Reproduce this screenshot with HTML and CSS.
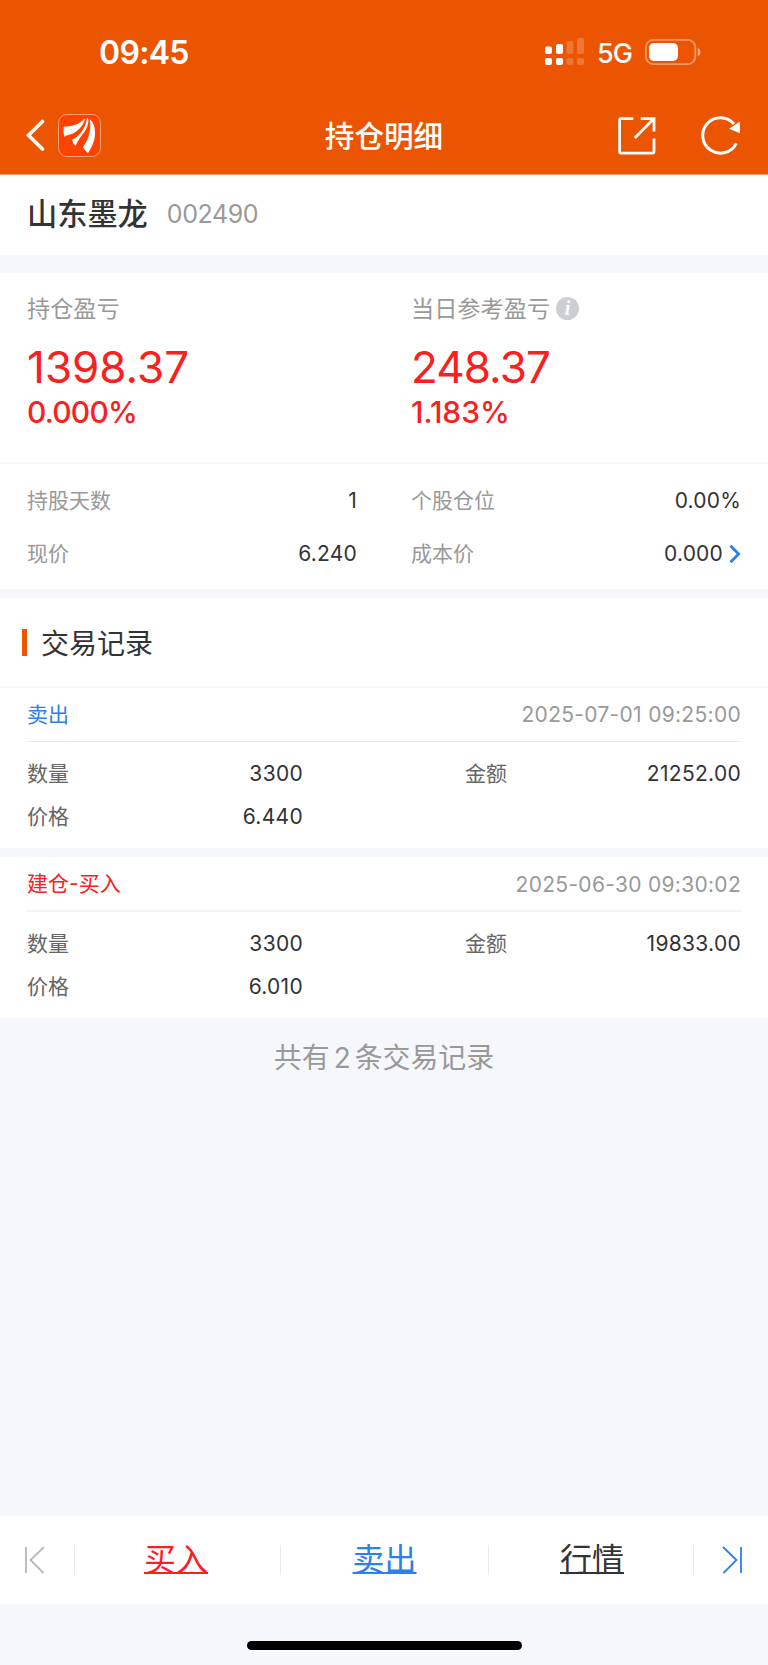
FILE: index.html
```html
<!DOCTYPE html>
<html lang="zh-CN">
<head>
  <meta charset="UTF-8">
  <meta name="viewport" content="width=device-width, initial-scale=1.0">
  <title>持仓明细</title>
  <link rel="stylesheet" href="styles.css">
</head>
<body>
  <header class="header">
    <div class="status-bar">
      <span class="time">09:45</span>
      <div class="status-icons">
        <svg class="signal" width="39" height="27" viewBox="0 0 39 27" fill="#fff">
          <rect x="0" y="8.5" width="7" height="7.5" rx="2"/>
          <rect x="0" y="20" width="7" height="7" rx="2"/>
          <rect x="11" y="6" width="7" height="10" rx="2"/>
          <rect x="11" y="20" width="7" height="7" rx="2"/>
          <g opacity="0.2">
            <rect x="21.5" y="3" width="7" height="13" rx="2"/>
            <rect x="21.5" y="20" width="7" height="7" rx="2"/>
            <rect x="32" y="0" width="7" height="16" rx="2"/>
            <rect x="32" y="20" width="7" height="7" rx="2"/>
          </g>
        </svg>
        <span class="network">5G</span>
        <svg class="battery" width="56" height="26" viewBox="0 0 56 26">
          <rect x="0.9" y="0.9" width="49.4" height="24.2" rx="7.5" fill="none" stroke="#fff" stroke-opacity="0.4" stroke-width="1.8"/>
          <rect x="4" y="4" width="29" height="18" rx="5" fill="#fff"/>
          <path d="M52.7 8.5Q55.6 10 55.6 13T52.7 17.5Z" fill="#fff" fill-opacity="0.5"/>
        </svg>
      </div>
    </div>
    <nav class="nav-bar">
      <div class="nav-left">
        <svg width="20" height="34" viewBox="0 0 20 34">
          <path d="M17.5 3.5L3.5 17.2L17.5 31" fill="none" stroke="#fff" stroke-width="3.6" stroke-linecap="round"/>
        </svg>
        <svg class="logo" width="43" height="43" viewBox="0 0 129 129">
          <rect x="1.5" y="1.5" width="126" height="126" rx="25" fill="#ff4200" stroke="#ff9f78" stroke-width="3"/>
          <g fill="#fff">
            <path d="M17 38C46 38 67 29 80 13C84 24 62 52 43 59C34 62 26 63 19 68Q15 52 17 38Z"/>
            <path d="M87 11Q92 13 91 24C88 45 77 57 67 70C60 80 57 88 52 96Q43 86 42 77C62 69 84 42 87 11Z"/>
            <path d="M95 15C108 25 112 45 111 62C110 85 98 105 90 117Q78 108 75 99C85 84 103 58 95 15Z"/>
          </g>
        </svg>
      </div>
      <h1>持仓明细</h1>
      <div class="nav-right">
        <svg width="38" height="38" viewBox="0 0 38 38" fill="none" stroke="#fff" stroke-width="2.8">
          <path d="M15.3 1.6H3.1Q1.6 1.6 1.6 3.1V34.6Q1.6 36.1 3.1 36.1H34.5Q36 36.1 36 34.6V21.5"/>
          <path d="M22.7 1.6H36V14.5M36 1.6L16.8 21"/>
        </svg>
        <svg width="40" height="40" viewBox="0 0 40 40">
          <path d="M35.3 27.3A17.7 17.7 0 1 1 33 8" fill="none" stroke="#fff" stroke-width="3"/>
          <path d="M39 5.5V17.2L28 12.8Z" fill="#fff"/>
        </svg>
      </div>
    </nav>
  </header>

  <main>
    <section class="stock">
      <span class="stock-name">山东墨龙</span>
      <span class="stock-code">002490</span>
    </section>

    <section class="profit">
      <div class="profit-item">
        <div class="profit-label">持仓盈亏</div>
        <div class="profit-value">1398.37</div>
        <div class="profit-rate">0.000%</div>
      </div>
      <div class="profit-item day">
        <div class="profit-label">当日参考盈亏 <i class="info">i</i></div>
        <div class="profit-value">248.37</div>
        <div class="profit-rate">1.183%</div>
      </div>
    </section>

    <section class="details">
      <div class="row"><span class="label">持股天数</span><span class="num">1</span></div>
      <div class="row"><span class="label">个股仓位</span><span class="num">0.00%</span></div>
      <div class="row"><span class="label">现价</span><span class="num">6.240</span></div>
      <div class="row">
        <span class="label">成本价</span>
        <span class="num">0.000</span>
        <svg class="chevron" width="12" height="20" viewBox="0 0 12 20">
          <path d="M1.5 1.8L9.6 10L1.5 18.2" fill="none" stroke="#2c80ea" stroke-width="2.8"/>
        </svg>
      </div>
    </section>

    <h2 class="section-title">交易记录</h2>

    <article class="record">
      <div class="record-head">
        <span class="label sell">卖出</span>
        <time>2025-07-01 09:25:00</time>
      </div>
      <div class="record-body">
        <div class="row"><span class="label">数量</span><span class="num">3300</span></div>
        <div class="row"><span class="label">金额</span><span class="num">21252.00</span></div>
        <div class="row"><span class="label">价格</span><span class="num">6.440</span></div>
      </div>
    </article>

    <article class="record">
      <div class="record-head">
        <span class="label buy">建仓-买入</span>
        <time>2025-06-30 09:30:02</time>
      </div>
      <div class="record-body">
        <div class="row"><span class="label">数量</span><span class="num">3300</span></div>
        <div class="row"><span class="label">金额</span><span class="num">19833.00</span></div>
        <div class="row"><span class="label">价格</span><span class="num">6.010</span></div>
      </div>
    </article>

    <p class="total">共有<span>2</span>条交易记录</p>
  </main>

  <footer>
    <div class="tabs">
      <div class="tab-edge">
        <svg width="20" height="28" viewBox="0 0 20 28" fill="none" stroke="#b8b8b8" stroke-width="1.8">
          <path d="M1 1V27M19 1L5.5 14L18.5 27"/>
        </svg>
      </div>
      <a class="tab buy">买入</a>
      <a class="tab sell">卖出</a>
      <a class="tab quote">行情</a>
      <div class="tab-edge">
        <svg width="20" height="28" viewBox="0 0 20 28" fill="none" stroke="#2c80ea" stroke-width="1.8">
          <path d="M19 1V27M1 1L14.5 14L1.5 27"/>
        </svg>
      </div>
    </div>
    <div class="home-indicator"></div>
  </footer>
</body>
</html>
```
FILE: styles.css
```css
:root {
  --orange: #eb5502;
  --red: #f92020;
  --blue: #2c80ea;
  --text: #333;
  --gray: #999;
  --bg: #f6f7fa;
}

* {
  box-sizing: border-box;
  margin: 0;
  padding: 0;
}

body {
  display: flex;
  flex-direction: column;
  height: 1665px;
  font-family: Inter, "Noto Sans CJK SC", sans-serif;
  font-size: 21px;
  color: var(--text);
  background: var(--bg);
}

svg {
  display: block;
  flex: none;
}

/* header */
.header {
  height: 175px;
  background: var(--orange);
  border-bottom: 1px solid #f29a68;
  color: white;
}

.status-bar {
  display: flex;
  justify-content: space-between;
  height: 98px;
  padding: 38px 67px 0 99px;
}

.time {
  font-size: 32px;
  font-weight: 600;
  line-height: 30px;
  letter-spacing: -0.7px;
}

.status-icons {
  display: flex;
  align-items: flex-start;
}

.network {
  width: 35px;
  margin: 0 13px 0 13px;
  font-size: 27px;
  font-weight: 500;
  line-height: 32px;
  letter-spacing: -0.9px;
}

.battery {
  margin-top: 1px;
}

.nav-bar {
  display: grid;
  grid-template-columns: 1fr auto 1fr;
  align-items: center;
  height: 76px;
  padding: 0 27px;
}

.nav-left,
.nav-right {
  display: flex;
  align-items: center;
}

.nav-left {
  gap: 13px;
  margin: 0 0 2px -2px;
}

.nav-right {
  justify-content: flex-end;
  gap: 45.5px;
}

h1 {
  font-size: 29.6px;
  font-weight: 500;
  line-height: 40px;
}

/* stock */
.stock {
  display: flex;
  align-items: center;
  height: 80px;
  padding: 0 27px 2px;
  background: white;
}

.stock-name {
  font-size: 30.2px;
  font-weight: 500;
  line-height: 40px;
}

.stock-code {
  margin-left: 19px;
  font-size: 25px;
  letter-spacing: -0.4px;
  color: var(--gray);
}

/* profit */
.profit {
  display: grid;
  grid-template-columns: 1fr 1fr;
  column-gap: 54px;
  height: 191px;
  margin-top: 18px;
  padding: 18px 27px 0;
  background: white;
  border-bottom: 2px solid #f7f8f9;
}

.profit-label {
  display: flex;
  align-items: center;
  height: 32px;
  font-size: 23.2px;
  color: var(--gray);
}

.info {
  width: 23px;
  height: 23px;
  margin: 2px 0 0 6px;
  border-radius: 50%;
  background: #ccced4;
  color: white;
  font: italic bold 20px/22px "Liberation Serif", serif;
  text-align: center;
}

.profit-value {
  margin-top: 17px;
  font-size: 44px;
  line-height: 54px;
  color: var(--red);
}

.day .profit-value {
  letter-spacing: -0.9px;
}

.profit-rate {
  margin-top: 1px;
  font-size: 30px;
  font-weight: 500;
  line-height: 35px;
  letter-spacing: -0.8px;
  color: var(--red);
}

.day .profit-rate {
  letter-spacing: 0;
}

/* details */
.row {
  display: flex;
  align-items: center;
}

.label {
  margin-top: -4px;
}

.num {
  margin-left: auto;
  color: var(--text);
  letter-spacing: 0.2px;
}

.details {
  display: grid;
  grid-template-columns: 1fr 1fr;
  grid-auto-rows: 53px;
  column-gap: 54px;
  height: 125px;
  padding: 10px 27px 0;
  background: white;
}

.details .label {
  margin-top: -3px;
  color: var(--gray);
}

.chevron {
  margin-left: 6px;
}

/* records */
.section-title {
  display: flex;
  align-items: center;
  height: 90px;
  margin-top: 9px;
  padding: 0 22px;
  background: white;
  border-bottom: 2px solid #f7f8f9;
  font-size: 28px;
  font-weight: 400;
}

.section-title::before {
  content: "";
  width: 5px;
  height: 27px;
  margin-right: 14px;
  background: var(--orange);
}

.record {
  height: 160px;
  padding: 0 27px;
  background: white;
}

.record + .record {
  height: 161px;
  margin-top: 9px;
}

.record-head {
  display: flex;
  justify-content: space-between;
  align-items: center;
  height: 54px;
  border-bottom: 1px solid #ececee;
}

.record + .record .record-head {
  height: 55px;
  padding-top: 1px;
  border-bottom: 2px solid #f3f3f5;
}

.record-head time {
  color: var(--gray);
  letter-spacing: 0.3px;
}

.record-body {
  display: grid;
  grid-template-columns: 1fr 1fr;
  grid-auto-rows: 43px;
  column-gap: 162px;
  padding-top: 10px;
  color: #666;
}

.record-body .num {
  letter-spacing: 0.3px;
}

.buy {
  color: var(--red);
}

.sell {
  color: var(--blue);
}

.total {
  height: 80px;
  font-size: 27.9px;
  line-height: 80px;
  text-align: center;
  color: var(--gray);
}

.total span {
  margin: 0 4px;
}

/* footer */
footer {
  margin-top: auto;
  height: 149px;
}

.tabs {
  display: flex;
  align-items: center;
  height: 88px;
  background: white;
}

.tab-edge {
  display: flex;
  justify-content: center;
  width: 74px;
  padding-right: 4px;
}

.tab-edge:last-child {
  padding: 0 0 0 2px;
}

.tab {
  width: 206px;
  height: 30px;
  border-left: 1px solid #eaeaec;
  font-size: 32px;
  line-height: 30px;
  text-align: center;
  text-decoration: underline 2px;
  text-underline-offset: 1px;
  text-decoration-skip-ink: none;
}

.tab.buy {
  padding-right: 3px;
}

.tab.sell {
  width: 208px;
}

.tab.quote {
  padding-left: 2px;
  border-right: 1px solid #eaeaec;
}

.home-indicator {
  width: 275px;
  height: 9px;
  margin: 37px auto 0;
  border-radius: 5px;
  background: black;
}
```
